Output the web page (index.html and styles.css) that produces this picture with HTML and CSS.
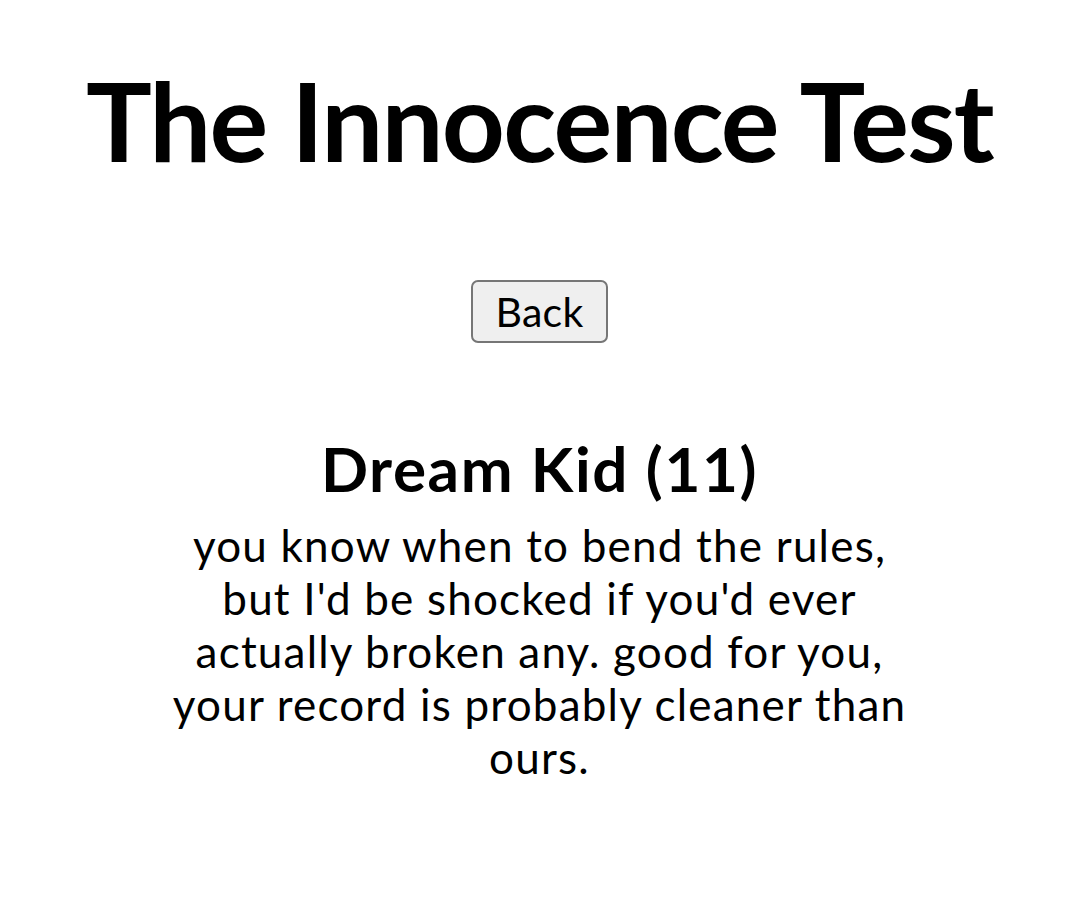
FILE: index.html
```html
<!DOCTYPE html>
<html>
<head>
<meta charset="utf-8">
<link rel="stylesheet" href="styles.css">
</head>
<body>
<main class="page">
  <h1 class="title">The Innocence Test</h1>
  <button class="back">Back</button>
  <section class="result">
    <h2 class="result-name">Dream Kid (11)</h2>
    <p class="result-text">you know when to bend the rules, but I'd be shocked if you'd ever actually broken any. good for you, your record is probably cleaner than ours.</p>
  </section>
</main>
</body>
</html>
```
FILE: styles.css
```css
html, body {
  margin: 0;
  padding: 0;
  background: #fff;
}
body {
  font-family: "Lato", "Noto Sans", sans-serif;
  color: #000;
}
.page {
  display: flex;
  flex-direction: column;
  align-items: center;
  text-align: center;
}
.title {
  margin: 59px 0 0;
  font-size: 110px;
  font-weight: 700;
  line-height: 120px;
  letter-spacing: -1.8px;
}
.back {
  margin-top: 101px;
  font-family: inherit;
  font-size: 41px;
  line-height: 49px;
  padding: 5px 22px;
  background: #efefef;
  border: 2px solid #767676;
  border-radius: 7px;
  color: #000;
  letter-spacing: 0.3px;
}
.result {
  margin-top: 90px;
  width: 755px;
}
.result-name {
  margin: 0;
  font-size: 62px;
  font-weight: 700;
  line-height: 70px;
  letter-spacing: 1.6px;
}
.result-text {
  margin: 16px 0 0;
  font-size: 44px;
  line-height: 53px;
  letter-spacing: 1.2px;
}
```
